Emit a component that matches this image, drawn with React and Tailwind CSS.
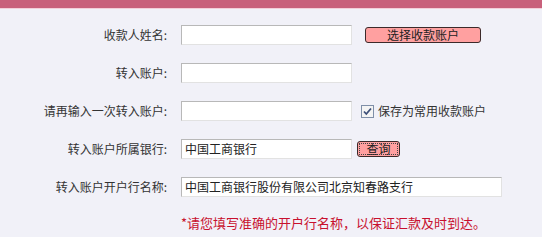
import React from 'react';

const Row = ({ label, children }) => (
    <div className="flex items-center h-5">
        <label className="w-[167px] shrink-0 text-right text-xs leading-5 text-[#333]">{label}</label>
        {children}
    </div>
);

const TextInput = ({ value = '', wide = false }) => (
    <input
        type="text"
        defaultValue={value}
        className={`ml-[14px] h-5 ${wide ? 'w-[321px]' : 'w-[171px]'} shrink-0 border border-[#b8b8b8] border-b-[#e2e2e2] border-r-[#e2e2e2] bg-white px-[3px] text-xs leading-5 text-[#222] outline-none`}
    />
);

const App = () => {
    return (
        <div className="min-h-[237px] w-full bg-[#f1f1f8] font-['Noto_Sans_CJK_SC',sans-serif]">
            <div className="h-2 bg-[#c8607b]" />
            <div className="h-px bg-[#f2cfd9]" />

            <div className="flex flex-col gap-[18px] pt-4">
                <Row label="收款人姓名:">
                    <TextInput />
                    <button
                        type="button"
                        className="ml-[13px] h-4 w-[116px] rounded-[3px] border border-[#3c2a2a] bg-[#ffa0a0] text-xs leading-none text-[#222]"
                    >
                        选择收款账户
                    </button>
                </Row>

                <Row label="转入账户:">
                    <TextInput />
                </Row>

                <Row label="请再输入一次转入账户:">
                    <TextInput />
                    <div className="ml-[9px] flex items-center gap-[4px] text-xs text-[#333]">
                        <svg width="13" height="13" viewBox="0 0 13 13">
                            <rect x="0.5" y="0.5" width="12" height="12" fill="#f4f4f4" stroke="#7f8fa8" />
                            <path d="M3 6.5 L5.3 9 L10 3.5" fill="none" stroke="#3d4f78" strokeWidth="1.8" />
                        </svg>
                        <span>保存为常用收款账户</span>
                    </div>
                </Row>

                <Row label="转入账户所属银行:">
                    <TextInput value="中国工商银行" />
                    <button
                        type="button"
                        className="ml-[5px] flex h-4 w-[43px] items-center justify-center rounded-[3px] border border-[#3c2a2a] bg-[#ffa0a0] p-[1px]"
                    >
                        <span className="flex h-full w-full items-center justify-center border border-dotted border-[#444] text-xs leading-none text-[#222]">
                            查询
                        </span>
                    </button>
                </Row>

                <Row label="转入账户开户行名称:">
                    <TextInput value="中国工商银行股份有限公司北京知春路支行" wide />
                </Row>

                <div className="h-4 pl-[181px] text-[13px] leading-4 text-[#c8102e]">
                    *请您填写准确的开户行名称，以保证汇款及时到达。
                </div>
            </div>
        </div>
    );
};

export default App;
